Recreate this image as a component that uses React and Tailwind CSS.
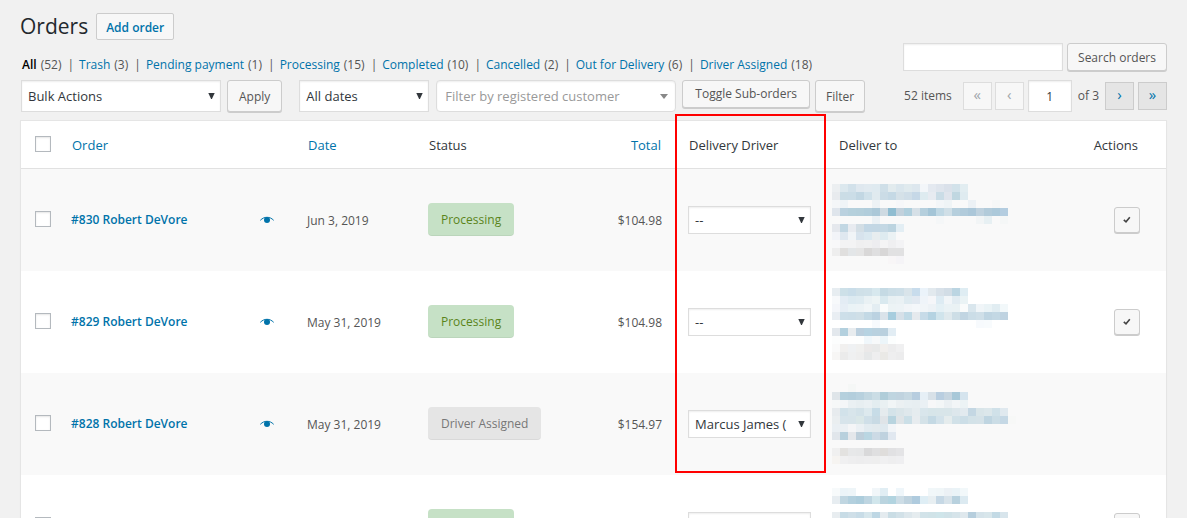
import React from "react";

const STATUS_VIEWS = [
  ["All", 52],
  ["Trash", 3],
  ["Pending payment", 1],
  ["Processing", 15],
  ["Completed", 10],
  ["Cancelled", 2],
  ["Out for Delivery", 6],
  ["Driver Assigned", 18],
];

// Obscured addresses: offset from the row top, then rows of 8px colour cells.
const ADDRESSES = {
  830: {
    top: 15,
    rows: [
      "eceff1 dce8ee d2e1ea dfe8ef e1eaf0 dfeaf0 cfdfe8 e2ebee dae6ed e0eaee dde7ee f3f6f9 e4e9f0 dfe5ed dae1ea d2e2ea e2edf1",
      "e8ebee cbdde6 cbdde7 c2d7e3 d0e1ea e0eaef cbdce6 c5d9e5 d5e1e8 d0dee8 c6d8e7 deebf0 e7ebf1 cadce6 dfe4ec c0d7e1 dfebf0",
      "f4f6f8 eff4f7 - - - edf2f5 - - f6f7f9 - - - - f3f6f8 eff4f6 - - ecf1f5 - - f5f7f7",
      "dfe5ec bad1df b5d0dc b4cfdb b1cddb abc8d8 cedae2 90bdd1 c2d1dc b0cfdd d6e0e7 b5cfdd a4c5d7 c0d8e4 d0dfe7 b6cfdd b1cbdb abc7d9 bed1de b2cbda acc9da b4cde0",
      "- - - - - ebf1f5 - - - - - - - f5f7f8 - - - - f2f5f6 e7f0f3 - f5f7f7",
      "e5e8ed c2d7e3 e8ebf0 d3dee5 c3d7e5 c3d7e4 c4d8e4 bcd4e0 e3eef4",
      "f2f4f8 dfe8f0 f0f4f7 d7e3ed dae8f0 e7edef deebf0 ebf2f4",
      "f8f8f9 f3f3f4 f3f3f4 efeff0 f0f0f1 ededf0 f4f4f5 efeff1 f3f3f5",
      "eeeeee e0dfde e3e6e8 e5e5e5 d9d8d8 dfdfe0 d8d7d7 e1e1e2 e1e1e2",
      "- - - - - - - f8f6f7 f5f4f7",
    ],
  },
  829: {
    top: 17,
    rows: [
      "e7edf1 cde0e8 c9dde9 cfe0e8 d0e1e9 d7e8ee c5dae4 ccdee7 cedfe8 d9e4ea c8dcec ebf3fa e2e9ee d8e1e9 d2dde6 bbd5e2 dfedf3",
      "f7f9fb e3ecf4 dceaf1 deebf1 e9f1f4 edf4f5 d9e9ef e8f0f3 eaf1f4 deeaf0 e2e9f1 eff4f9 f5f6f9 ddebf3 f1f5f8 e2ecf2 eaf3f5",
      "f4f6fa e6eef5 eaf3f6 ecf3f6 f1f6f8 e3edf2 fafcfc ecf3f5 edf3f6 f2f5f8 f4f7fa f1f5f8 edf2f6 e4f0f5 eaf2f5 eaf2f4 f9fbfb d9e6ed f0f5f8 eaf3f6 e1edf2 f2f8fa",
      "e9eef3 cddfe9 ccdee8 cfdfe7 c3d9e5 bbd2e1 dae3ea a7cdde d6e0e8 c1dae6 e5e9ed c7dbe8 b5d3e2 d0e4ec dfe9ed cddee6 c1d5e2 cbdde7 cfdfe8 bfd5e2 c3d8e4 bfd3e1",
      "- - - - - f7fafd - - - - - - - - - - - - f7fafd f8fbfd",
      "e3e8ed b3d0de e8ecef bbcfde b7d3e2 b9d1df b9d0de e2edf4",
      "fcfdfd fdfefe fefefe fdfefe f0f7fb f7f9fa ecf5f9 fcfefe",
      "fafafa f1f0ef eff1f3 f0f0ef ebe9e9 e8e9e9 f1efed ececed f0f0f1",
      "f7f6f5 ebebeb eff0f1 eeeeee e6e8e9 eeeeef eae9e6 eeeeef ececed",
    ],
  },
  828: {
    top: 11,
    rows: [
      "- - f5f7f6",
      "dfe5e9 b5d0dd b3cedc b8d1de c2d7e1 cbdde5 b0cdd9 bfd5e0 c0d3df c6d8e2 b7cddf e6eff6 d8e1e8 b9cee0 c6d5e0 a8c8d8 d5e4ee",
      "f6f8f8 f4f6f8 eaf0f3 e7eef1 eaf0f3 e3edf0 e9f0f2 f1f5f6 ebf0f2 e8eff2 e7eef1 eaf0f4 f7f7f8 f3f6f7 ebf0f3 f2f5f7 ecf3f5",
      "e7ebee d2e2ea d8e5eb d3e2e9 dde9ee c7dce7 e5ebee d4e3e9 dae5e9 dfe8ec e5ecef d9e6ec d7e5e9 d8e5e9 d8e5e9 dde7ec e2eaef c4d7e3 d9e5e9 dce7eb d0e1e9 e0e9ef",
      "eaeef0 d7e4eb d7e4ea dae7e8 cfdfe8 c8dae4 dfe4e8 b8d4df dfe4e7 cbdfe7 e7ecef d4e2e8 c4d9e4 d3e2ea e5eced d1e1e8 ccdee7 d3e2e8 d5e2e8 bfd5e1 cbdde6 c5d8e5 f7f8f7",
      "eaeff3 ebf0f4 f4f5f7 ebf0f4 e2ebf0 e2eaee dfe9ef f2f5f8",
      "e1e6eb b8d0dd e4e7eb becfdb bad6e2 ccdae5 bfd2df e1e8f0",
      "",
      "f0f0f0 e3e2e0 e7e8e9 e6e7e8 d9d9da dfdfe0 dfdddb e1e1e3 e4e4e6",
      "f6f4f1 f0f0f1 eeeeef ededee eeeeef eeeeee f0f0f1 eeeeef efeff1",
    ],
  },
  827: {
    top: 13,
    rows: [
      "f7fafb ecf4f8 eef5f8 - - f1f6f9 e1eef4 - eff6fa - - - f1f7f9 f0f6f8 ecf1f5 eaf3f7 f2f8fa",
      "e7edf1 c0d6e1 b3d0de adcddc bed5e1 d1e6ec bad4df b2d4e0 cddde6 bfd3df afcbde dfeef5 e8eff2 c6d8e5 d8e3ea b8d1de dceaf1",
      "",
      "e8edf0 c8dce6 cfdfe8 c8dce7 d6e6ec bed7e4 e4ebef cadde5 d2e1e8 dde7ec e5ecef d2e3e9 d0e3e8 cfe5ea d0e2e8 d6e4ea dfe8ed b6cedd d5e3ea d8e6eb c3dae5 d8e5ec",
      "e7edf1 d0e1e9 ccdfe8 cfe0e8 c3d9e5 bbd2e1 dae3ea a7cdde d6e0e8 c1dae6 e5e9ed c7dbe8 b5d3e2 d0e4ec dfe9ed cddee6 c1d5e2 cbdde7 cfdfe8 bfd5e2 c3d8e4 bfd3e1",
    ],
  },
};

const ORDERS = [
  { id: 830, name: "Robert DeVore", date: "Jun 3, 2019", status: "Processing", total: "$104.98", driver: "--", complete: true },
  { id: 829, name: "Robert DeVore", date: "May 31, 2019", status: "Processing", total: "$104.98", driver: "--", complete: true },
  { id: 828, name: "Robert DeVore", date: "May 31, 2019", status: "Driver Assigned", total: "$154.97", driver: "Marcus James (", complete: false },
  { id: 827, name: "Robert DeVore", date: "May 31, 2019", status: "Processing", total: "$104.98", driver: "--", complete: true },
];

function Button({ className = "", pad = "px-2.5 pt-0.5", children, ...rest }) {
  return (
    <button
      type="button"
      className={`shrink-0 rounded-[3px] border border-[#ccc] bg-[#f7f7f7] whitespace-nowrap text-[#555] shadow-[0_1px_0_#ccc] ${pad} ${className}`}
      {...rest}
    >
      {children}
    </button>
  );
}

function Select({ label, className = "", selectClass = "", arrow = "dark", children }) {
  return (
    <div className={`relative ${className}`}>
      <select
        aria-label={label}
        className={`block w-full appearance-none border border-[#ddd] bg-white shadow-[inset_0_1px_2px_rgba(0,0,0,0.07)] ${selectClass}`}
      >
        {children}
      </select>
      {arrow === "dark" ? (
        <svg className="pointer-events-none absolute inset-y-0 right-1.5 my-auto" width="7" height="8" viewBox="0 0 7 8" aria-hidden="true">
          <path d="M0.3 1h6.4L3.9 7h-0.8z" fill="#32373c" />
        </svg>
      ) : (
        <svg className="pointer-events-none absolute inset-y-0 right-2 my-auto" width="8" height="5" viewBox="0 0 8 5" aria-hidden="true">
          <path d="M0 0h8L4 5z" fill="#888" />
        </svg>
      )}
    </div>
  );
}

function Checkbox({ label }) {
  return (
    <input
      type="checkbox"
      aria-label={label}
      className="block size-4 appearance-none border border-[#b4b9be] bg-white shadow-[inset_0_1px_2px_rgba(0,0,0,0.1)]"
    />
  );
}

function PageLink({ label, children, disabled }) {
  return (
    <button
      type="button"
      aria-label={label}
      disabled={disabled}
      className={
        disabled
          ? "h-7 w-[29px] border border-[#ddd] bg-[#f7f7f7] pb-1 text-[15px] leading-none text-[#a0a5aa]"
          : "h-7 w-[29px] border border-[#ccc] bg-[#e5e5e5] pb-1 text-[15px] leading-none text-[#0073aa]"
      }
    >
      {children}
    </button>
  );
}

function Mosaic({ top, rows }) {
  return (
    <svg className="block" width="184" height="102" viewBox="0 0 184 102" shapeRendering="crispEdges" aria-hidden="true">
      {rows.map((row, y) =>
        row.split(" ").map((color, x) =>
          color && color !== "-" ? (
            <rect key={`${x}-${y}`} x={x * 8} y={top + y * 8} width="8" height="8" fill={`#${color}`} />
          ) : null
        )
      )}
    </svg>
  );
}

function StatusBadge({ status }) {
  const tone = status === "Processing" ? "bg-[#c6e1c6] text-[#5b841b]" : "bg-[#e5e5e5] text-[#777]";
  return (
    <mark className={`inline-block h-[33px] rounded border-b border-black/5 px-[13px] align-middle leading-[34px] whitespace-nowrap ${tone}`}>
      {status}
    </mark>
  );
}

function OrderRow({ order }) {
  return (
    <tr className="h-[102px] odd:bg-[#f9f9f9] even:bg-white">
      <td className="pb-0.5 pl-3.5">
        <Checkbox label={`Select order ${order.id}`} />
      </td>
      <td className="pr-[23px] pl-2.5">
        <div className="flex items-center justify-between">
          <a href="#order" className="font-semibold text-[#0073aa]">
            #{order.id} {order.name}
          </a>
          <button type="button" aria-label={`Preview order ${order.id}`} className="text-[#0073aa]">
            <svg className="block" width="14" height="8" viewBox="0 0 14 8" aria-hidden="true">
              <path d="M0.3 4.300C2.4 2.200 4.6 1.300 7 1.300S11.600 2.200 13.700 4.300" fill="none" stroke="currentColor" strokeWidth="1" />
              <circle cx="7" cy="4" r="3" fill="currentColor" />
            </svg>
          </button>
        </div>
      </td>
      <td className="pt-0.5 pl-2.5">{order.date}</td>
      <td className="pb-0.5 pl-2.5">
        <StatusBadge status={order.status} />
      </td>
      <td className="pt-0.5 pr-2.5 text-right">{order.total}</td>
      <td className="pr-[17px] pl-4">
        <Select label={`Driver for order ${order.id}`} selectClass="h-7 pr-4 pl-1.5 text-[13px] text-[#32373c]">
          <option>{order.driver}</option>
        </Select>
      </td>
      <td className="p-0 pl-1">
        <Mosaic {...ADDRESSES[order.id]} />
      </td>
      <td className="pr-[26px]">
        {order.complete && (
          <Button
            aria-label={`Complete order ${order.id}`}
            pad="p-0"
            className="ml-auto flex size-[26px] items-center justify-center"
          >
            <svg className="shrink-0" width="8" height="8" viewBox="0 0 8 8" aria-hidden="true">
              <path d="M0.800 3.800L3 5.800L6.800 1.200" fill="none" stroke="#444" strokeWidth="1.600" />
            </svg>
          </Button>
        )}
      </td>
    </tr>
  );
}

export default function App() {
  return (
    <main className="min-h-screen bg-[#f1f1f1] px-5 pt-3 font-['Open_Sans',sans-serif] text-[12px] leading-5 text-[#555]">
      <header className="flex h-7 items-center gap-2">
        <h1 className="text-[21px] leading-7 text-[#23282d]">Orders</h1>
        <a href="#new" className="rounded-[2px] border border-[#ccc] bg-[#f7f7f7] px-[9px] pt-1 pb-px font-semibold text-[#0073aa]">
          Add order
        </a>
      </header>

      <div className="mt-[3px] flex items-start justify-between">
        <ul className="flex pt-3 pl-0.5 whitespace-nowrap">
          {STATUS_VIEWS.map(([name, count], i) => (
            <li key={name} className="flex">
              {i > 0 && <span className="pr-[5px] pl-1.5">|</span>}
              <a href="#view" className={i === 0 ? "font-semibold text-black" : "text-[#0073aa]"}>
                {name}
              </a>
              <span className="pl-1">({count})</span>
            </li>
          ))}
        </ul>
        <div className="flex gap-1">
          <input
            type="search"
            aria-label="Search orders"
            className="h-7 w-40 border border-[#ddd] bg-white px-1 shadow-[inset_0_1px_2px_rgba(0,0,0,0.07)]"
          />
          <Button className="h-7">Search orders</Button>
        </div>
      </div>

      <div className="mt-[5px] flex items-start justify-between pl-px">
        <div className="flex items-start">
          <Select label="Bulk actions" className="w-[200px]" selectClass="h-8 pl-1.5 text-[13px] text-[#32373c]">
            <option>Bulk Actions</option>
          </Select>
          <Button className="ml-1.5 h-8" pad="px-[11px] pt-0.5">Apply</Button>
          <Select label="Filter by date" className="ml-[17px] w-[130px]" selectClass="h-8 pl-1.5 text-[13px] text-[#32373c]">
            <option>All dates</option>
          </Select>
          <Select label="Filter by customer" className="ml-[7px] w-60" selectClass="h-8 rounded pl-2 text-[13px] text-[#999]" arrow="light">
            <option>Filter by registered customer</option>
          </Select>
          <Button className="ml-1.5 h-7" pad="px-3">Toggle Sub-orders</Button>
          <Button className="ml-[5px] h-8">Filter</Button>
        </div>
        <nav aria-label="Pagination" className="flex items-center">
          <span className="mr-[11px]">52 items</span>
          <div className="flex gap-[3px]">
            <PageLink label="First page" disabled>«</PageLink>
            <PageLink label="Previous page" disabled>‹</PageLink>
          </div>
          <input
            aria-label="Current page"
            defaultValue="1"
            className="mx-1 h-8 w-11 border border-[#ddd] bg-white text-center text-[#32373c] shadow-[inset_0_1px_2px_rgba(0,0,0,0.07)]"
          />
          <span className="mr-1.5 ml-0.5">of 3</span>
          <div className="flex gap-1">
            <PageLink label="Next page">›</PageLink>
            <PageLink label="Last page">»</PageLink>
          </div>
        </nav>
      </div>

      <div className="mt-2 border border-[#e5e5e5] bg-white shadow-[0_1px_1px_rgba(0,0,0,0.04)]">
        <table className="w-full table-fixed border-separate border-spacing-0 text-left">
          <colgroup>
            <col className="w-10" />
            <col />
            <col className="w-[121px]" />
            <col className="w-[142px]" />
            <col className="w-28" />
            <col className="w-[156px]" />
            <col className="w-[200px]" />
            <col className="w-[138px]" />
          </colgroup>
          <thead>
            <tr className="h-12 text-[13px] text-[#32373c] [&>th]:border-b [&>th]:border-[#e1e1e1] [&>th]:font-normal">
              <th className="pb-0.5 pl-3.5">
                <Checkbox label="Select all orders" />
              </th>
              <th className="pl-[11px]">
                <a href="#sort-order" className="text-[#0073aa]">Order</a>
              </th>
              <th className="pl-[11px]">
                <a href="#sort-date" className="text-[#0073aa]">Date</a>
              </th>
              <th className="pl-[11px]">Status</th>
              <th className="pr-[11px] text-right">
                <a href="#sort-total" className="text-[#0073aa]">Total</a>
              </th>
              <th className="relative pl-[17px]">
                Delivery Driver
                <span className="pointer-events-none absolute -top-[7px] left-[3px] z-10 h-[359px] w-[151px] border-2 border-[#f00]" />
              </th>
              <th className="pl-[11px]">Deliver to</th>
              <th className="pr-7 text-right">Actions</th>
            </tr>
          </thead>
          <tbody>
            {ORDERS.map((order) => (
              <OrderRow key={order.id} order={order} />
            ))}
          </tbody>
        </table>
      </div>
    </main>
  );
}
